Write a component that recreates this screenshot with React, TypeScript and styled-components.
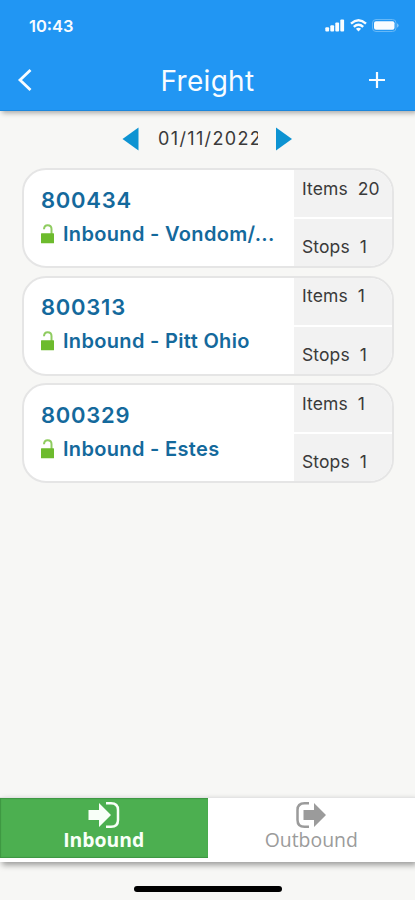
import React from "react";
import styled, { createGlobalStyle } from "styled-components";

const GlobalStyle = createGlobalStyle`
  * { box-sizing: border-box; }
  html, body { margin: 0; padding: 0; background: #f7f7f5; overflow: hidden; }
  body { font-family: Inter, "Liberation Sans", sans-serif; }
  button { border: 0; padding: 0; margin: 0; background: none; font-family: inherit; display: block; }
  svg { display: block; flex: none; }
`;

const Screen = styled.div`
  width: 415px;
  height: 900px;
  display: flex;
  flex-direction: column;
  background: #f7f7f5;
`;

const Header = styled.header`
  height: 111px;
  flex: none;
  background: #2196f3;
  border-bottom: 1px solid #1c87dc;
  box-shadow: 2px 2px 5px rgba(0, 0, 0, 0.32);
  color: #f8fcff;
`;

const StatusBar = styled.div`
  height: 50px;
  padding: 1px 16px 0 29px;
  display: flex;
  align-items: center;
  justify-content: space-between;
`;

const Clock = styled.span`
  font-size: 16.5px;
  font-weight: 600;
`;

const StatusIcons = styled.div`
  display: flex;
  align-items: center;
  gap: 5px;
`;

const TitleBar = styled.div`
  height: 60px;
  display: grid;
  grid-template-columns: 60px 1fr 60px;
  align-items: center;
`;

const Title = styled.h1`
  margin: 0;
  text-align: center;
  font-size: 28px;
  line-height: 34px;
  padding-top: 2px;
  font-weight: 400;
  letter-spacing: 0.3px;
`;

const BackButton = styled.button`
  padding-left: 17px;
  color: inherit;
`;

const AddButton = styled.button`
  padding-left: 13px;
  color: inherit;
`;

const DateBar = styled.div`
  height: 57px;
  flex: none;
  padding: 0 0 1px;
  display: flex;
  align-items: center;
  justify-content: center;
  gap: 18px;
`;

const DateValue = styled.div`
  width: 101px;
  margin-top: -2px;
  padding-left: 1px;
  overflow: hidden;
  white-space: nowrap;
  font-size: 18px;
  letter-spacing: 1.35px;
  color: #3a3a3a;
`;

const List = styled.main`
  flex: 1;
  padding: 0 21px 0 22px;
  display: flex;
  flex-direction: column;
  gap: 7.5px;
`;

const Card = styled.article`
  height: 100px;
  display: flex;
  border: 2px solid #e5e5e5;
  border-radius: 24px;
  overflow: hidden;
  background: #fff;
`;

const Summary = styled.div`
  flex: 1;
  min-width: 0;
  padding: 14.5px 12px 0 17px;
  color: #14699c;
`;

const LoadNumber = styled.div`
  font-size: 22px;
  line-height: 30px;
  font-weight: 600;
  letter-spacing: 0.75px;
`;

const Route = styled.div`
  display: flex;
  align-items: center;
  gap: 9px;
  height: 38px;
`;

const RouteName = styled.span`
  white-space: nowrap;
  font-size: 20px;
  font-weight: 600;
  letter-spacing: 0.33px;
`;

const Counts = styled.div`
  width: 98px;
  display: grid;
  grid-template-rows: 47px 47px;
  gap: 2px;
`;

const Count = styled.div<{ $low?: boolean }>`
  display: flex;
  gap: 10px;
  align-items: flex-start;
  padding: ${(p) => (p.$low ? "18px" : "8.5px")} 0 0 8px;
  background: #f2f2f2;
  color: #3a3a3a;
  font-size: 17.5px;
  line-height: 20px;
  letter-spacing: 0.1px;
`;

const Tabs = styled.nav`
  height: 65px;
  flex: none;
  display: grid;
  grid-template-columns: 1fr 1fr;
  background: #fff;
  border-top: 1px solid #e4e4e4;
  box-shadow: 2px 3px 6px rgba(0, 0, 0, 0.38);
`;

const Tab = styled.button<{ $active?: boolean }>`
  height: 60px;
  padding-top: 3px;
  display: flex;
  flex-direction: column;
  align-items: center;
  background: ${(p) => (p.$active ? "#4caf50" : "#fff")};
  box-shadow: ${(p) => (p.$active ? "inset 1px 1px 1px #3d9642, inset 0 -1px 1px #3d9642" : "none")};
  color: ${(p) => (p.$active ? "#f8fff8" : "#9b9b9b")};
`;

const TabLabel = styled.span<{ $active?: boolean }>`
  font-family: "Open Sans", sans-serif;
  font-size: 19.4px;
  line-height: 22px;
  font-weight: ${(p) => (p.$active ? 700 : 400)};
`;

const HomeArea = styled.footer`
  height: 38px;
  flex: none;
  padding-top: 24px;
  display: flex;
  justify-content: center;
`;

const HomeIndicator = styled.div`
  width: 148px;
  height: 6px;
  border-radius: 3px;
  background: #000;
`;

const SignalIcon = () => (
  <svg width="20" height="13" viewBox="0 0 20 13" fill="currentColor">
    <rect x="0.3" y="8.3" width="3.8" height="4.2" rx="1" />
    <rect x="5.3" y="6.2" width="3.8" height="6.3" rx="1" />
    <rect x="10.3" y="3.4" width="3.8" height="9.1" rx="1" />
    <rect x="15.3" y="0.6" width="3.8" height="11.9" rx="1" />
  </svg>
);

const WifiIcon = () => (
  <svg width="17" height="13" viewBox="0 0 17 13" fill="none" stroke="currentColor" strokeWidth="2.4">
    <path d="M1 4.7 Q8.5 -2 16 4.7" />
    <path d="M3.8 7.8 Q8.5 3.6 13.2 7.8" />
    <path d="M8.5 12.5 L5.9 9.8 Q8.5 7.6 11.1 9.8 Z" fill="currentColor" stroke="none" />
  </svg>
);

const BatteryIcon = () => (
  <svg width="27" height="13" viewBox="0 0 27 13">
    <rect x="0.5" y="0.5" width="23.5" height="12" rx="3.5" fill="none" stroke="#66b8f7" />
    <rect x="2" y="2.2" width="20.5" height="8.6" rx="2" fill="currentColor" />
    <path d="M25 4.3 Q26.7 5 26.7 6.5 Q26.7 8 25 8.7 Z" fill="#7cc2f8" />
  </svg>
);

const UnlockIcon = () => (
  <svg width="13" height="20" viewBox="0 0 13 20">
    <path d="M3 5.2 Q3.2 1.2 6.6 1.2 Q10.5 1.2 10.5 5 V10" fill="none" stroke="#8fcc60" strokeWidth="2" />
    <rect x="0" y="9.3" width="13" height="10" rx="0.5" fill="#6dbb2d" />
  </svg>
);

const InboundIcon = () => (
  <svg width="32" height="28" viewBox="0 0 32 28">
    <path d="M0.5 9 H11 V2 L23 14 L11 26 V19 H0.5 Z" fill="currentColor" />
    <path d="M18 2.2 H23 Q30 2.2 30 9 V19 Q30 25.8 23 25.8 H18" fill="none" stroke="currentColor" strokeWidth="2.5" />
  </svg>
);

const OutboundIcon = () => (
  <svg width="32" height="28" viewBox="0 0 32 28">
    <path d="M8.5 9 H19 V2 L31 14 L19 26 V19 H8.5 Z" fill="currentColor" />
    <path d="M14 2.2 H9.5 Q2.5 2.2 2.5 9 V19 Q2.5 25.8 9.5 25.8 H14" fill="none" stroke="currentColor" strokeWidth="2.5" />
  </svg>
);

const loads = [
  { id: "800434", route: "Inbound - Vondom/...", items: 20, stops: 1 },
  { id: "800313", route: "Inbound - Pitt Ohio", items: 1, stops: 1 },
  { id: "800329", route: "Inbound - Estes", items: 1, stops: 1 },
];

export default function App() {
  return (
    <Screen>
      <GlobalStyle />
      <Header>
        <StatusBar>
          <Clock>10:43</Clock>
          <StatusIcons>
            <SignalIcon />
            <WifiIcon />
            <BatteryIcon />
          </StatusIcons>
        </StatusBar>
        <TitleBar>
          <BackButton aria-label="Back">
            <svg width="16" height="24" viewBox="0 0 16 24" fill="none" stroke="currentColor" strokeWidth="2.8">
              <path d="M13.5 2 L3 12 L13.5 22" />
            </svg>
          </BackButton>
          <Title>Freight</Title>
          <AddButton aria-label="Add">
            <svg width="18" height="18" viewBox="0 0 18 18" fill="none" stroke="currentColor" strokeWidth="2.2">
              <path d="M1 9 H17 M9 1 V17" />
            </svg>
          </AddButton>
        </TitleBar>
      </Header>
      <DateBar>
        <button aria-label="Previous day">
          <svg width="17" height="24" viewBox="0 0 17 24" fill="#0d93d2">
            <path d="M0.5 12 L16.5 0.5 V23.5 Z" />
          </svg>
        </button>
        <DateValue>01/11/2022</DateValue>
        <button aria-label="Next day">
          <svg width="17" height="24" viewBox="0 0 17 24" fill="#0d93d2">
            <path d="M16 12 L0 0.5 V23.5 Z" />
          </svg>
        </button>
      </DateBar>
      <List>
        {loads.map((load) => (
          <Card key={load.id}>
            <Summary>
              <LoadNumber>{load.id}</LoadNumber>
              <Route>
                <UnlockIcon />
                <RouteName>{load.route}</RouteName>
              </Route>
            </Summary>
            <Counts>
              <Count>
                <span>Items</span>
                <span>{load.items}</span>
              </Count>
              <Count $low>
                <span>Stops</span>
                <span>{load.stops}</span>
              </Count>
            </Counts>
          </Card>
        ))}
      </List>
      <Tabs>
        <Tab $active>
          <InboundIcon />
          <TabLabel $active>Inbound</TabLabel>
        </Tab>
        <Tab>
          <OutboundIcon />
          <TabLabel>Outbound</TabLabel>
        </Tab>
      </Tabs>
      <HomeArea>
        <HomeIndicator />
      </HomeArea>
    </Screen>
  );
}
